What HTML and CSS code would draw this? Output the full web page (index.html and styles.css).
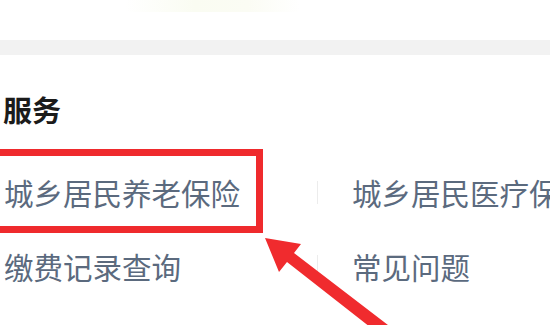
FILE: index.html
```html
<!DOCTYPE html>
<html lang="zh-CN">
<head>
<meta charset="utf-8">
<title>服务</title>
<link rel="stylesheet" href="styles.css">
</head>
<body>
<div class="page">
  <div class="top"><span class="top-blur"></span></div>
  <div class="band"></div>
  <section class="services">
    <h2 class="title">服务</h2>
    <div class="grid">
      <div class="item">城乡居民养老保险</div>
      <div class="item col2"><span class="divider"></span><span>城乡居民医疗保险</span></div>
      <div class="item">缴费记录查询</div>
      <div class="item col2"><span class="divider"></span><span>常见问题</span></div>
    </div>
  </section>
  <div class="highlight"></div>
  <svg class="arrow" width="550" height="325" viewBox="0 0 550 325" xmlns="http://www.w3.org/2000/svg">
    <polygon fill="#f02b2e" points="265,238 301,244 294,253 401,335 393,345 287,262 279,272"/>
  </svg>
</div>
</body>
</html>
```

FILE: styles.css
```css
html, body {
  margin: 0;
  padding: 0;
  background: #ffffff;
}
.page {
  position: relative;
  width: 550px;
  height: 325px;
  overflow: hidden;
  font-family: "Noto Sans CJK SC", "Noto Sans", sans-serif;
}
.top {
  height: 40px;
}
.top-blur {
  display: block;
  margin-left: 125px;
  width: 175px;
  height: 12px;
  background: linear-gradient(90deg, #ffffff, #fafcf2 40%, #fbfcf4 70%, #ffffff);
  border-radius: 4px;
}
.band {
  height: 15px;
  background: #f2f2f2;
}
.services {
  padding-top: 40px;
}
.title {
  margin: 0 0 0 3px;
  font-size: 29px;
  line-height: 29px;
  font-weight: 700;
  color: #1b1b1b;
}
.grid {
  margin-top: 31px;
  display: grid;
  grid-template-columns: 317px 1fr;
  grid-auto-rows: 74px;
}
.item {
  display: flex;
  align-items: center;
  padding-left: 4px;
  font-size: 29.5px;
  color: #5b6a7e;
  white-space: nowrap;
}
.item.col2 {
  padding-left: 0;
}
.divider {
  display: block;
  width: 1px;
  height: 23px;
  background: #ececec;
  margin-right: 34px;
}
.highlight {
  position: absolute;
  left: -12px;
  top: 149px;
  width: 261px;
  height: 70px;
  border: 7px solid #ef2a2d;
}
.arrow {
  position: absolute;
  left: 0;
  top: 0;
}
```
